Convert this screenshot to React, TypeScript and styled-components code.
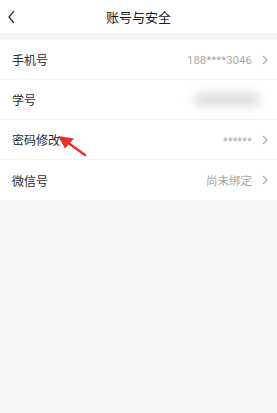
import React from "react";
import styled, { createGlobalStyle } from "styled-components";

const Global = createGlobalStyle`
  html, body { margin: 0; padding: 0; background: #f4f5f7; }
  body { font-family: "Noto Sans CJK SC", "Noto Sans", sans-serif; }
`;

const Page = styled.div`
  position: relative;
  width: 277px;
  min-height: 413px;
  background: #f4f5f7;
`;

const Header = styled.div`
  height: 33px;
  background: #fff;
  display: flex;
  align-items: center;
  justify-content: center;
  position: relative;
`;

const BackBtn = styled.div`
  position: absolute;
  left: 6px;
  top: 9px;
  width: 12px;
  height: 16px;
  display: flex;
`;

const Title = styled.div`
  font-size: 13px;
  color: #1a1a1a;
  line-height: 1;
`;

const List = styled.div`
  margin-top: 7px;
  background: #fff;
`;

const Row = styled.div<{ $last?: boolean }>`
  height: 40px;
  box-sizing: border-box;
  display: flex;
  align-items: center;
  padding: 0 9px 0 12px;
  border-bottom: ${(p) => (p.$last ? "none" : "1px solid #f3f3f3")};
`;

const Label = styled.div`
  flex: 1;
  font-size: 12px;
  color: #2a2a2a;
`;

const Value = styled.div<{ $stars?: boolean }>`
  font-family: Roboto, "Noto Sans CJK SC", sans-serif;
  font-size: ${(p) => (p.$stars ? "10.5px" : "11.5px")};
  color: #a8a8a8;
  margin-right: 10px;
  letter-spacing: ${(p) => (p.$stars ? "0.3px" : "0")};
  transform: ${(p) => (p.$stars ? "translateY(2px)" : "none")};
`;

const CjkValue = styled(Value)`
  font-family: "Noto Sans CJK SC", sans-serif;
  font-size: 11.5px;
`;

const Blurred = styled.div`
  width: 66px;
  height: 13px;
  margin-right: 8px;
  border-radius: 7px;
  background: #dedede;
  filter: blur(5px);
`;

const Chevron = styled.svg`
  width: 6px;
  height: 10px;
`;

const Arrow = styled.svg`
  position: absolute;
  left: 54px;
  top: 132px;
  width: 36px;
  height: 27px;
`;

const RightChevron = () => (
  <Chevron viewBox="0 0 6 10">
    <path d="M1 1 L5 5 L1 9" fill="none" stroke="#a8a8a8" strokeWidth="1.1" />
  </Chevron>
);

export default function App() {
  return (
    <Page>
      <Global />
      <Header>
        <BackBtn>
          <svg width="12" height="16" viewBox="0 0 12 16">
            <path d="M8 2 L3 8 L8 14" fill="none" stroke="#333" strokeWidth="1.3" />
          </svg>
        </BackBtn>
        <Title>账号与安全</Title>
      </Header>
      <List>
        <Row>
          <Label>手机号</Label>
          <Value>188****3046</Value>
          <RightChevron />
        </Row>
        <Row>
          <Label>学号</Label>
          <Blurred />
        </Row>
        <Row>
          <Label>密码修改</Label>
          <Value $stars>******</Value>
          <RightChevron />
        </Row>
        <Row $last>
          <Label>微信号</Label>
          <CjkValue>尚未绑定</CjkValue>
          <RightChevron />
        </Row>
      </List>
      <Arrow viewBox="0 0 36 27">
        <path d="M31 23 L13 10" stroke="#e8312a" strokeWidth="2.4" strokeLinecap="round" />
        <path d="M4 4 L20 6.5 L11 16.5 Z" fill="#e8312a" />
      </Arrow>
    </Page>
  );
}
